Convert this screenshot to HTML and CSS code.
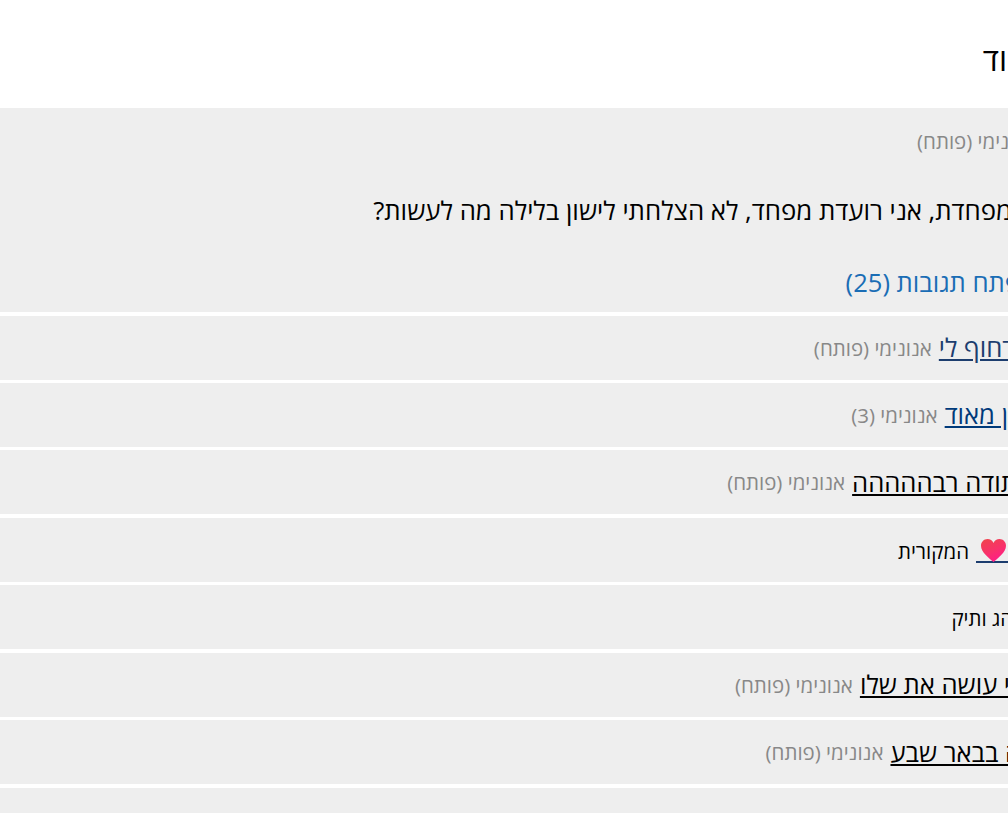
FILE: index.html
```html
<!DOCTYPE html>
<html lang="he" dir="rtl">
<head>
    <meta charset="utf-8">
    <title>פורום</title>
    <link rel="stylesheet" href="styles.css">
</head>
<body>
    <div class="page">
        <h1 class="page-title">וד</h1>

        <div class="topic">
            <div class="topic-author">אנונימי (פותח)</div>
            <p class="topic-text">מפחדת, אני רועדת מפחד, לא הצלחתי לישון בלילה מה לעשות?</p>
            <a class="topic-replies" href="#">פתח תגובות (25)</a>
        </div>

        <div class="row"><div class="row-inner shift-a"><a class="row-link navy" href="#">רחוף לי</a> <span class="meta">אנונימי (פותח)</span></div></div>
        <div class="row"><div class="row-inner shift-b"><a class="row-link blue" href="#">ן מאוד</a> <span class="meta">אנונימי (3)</span></div></div>
        <div class="row"><div class="row-inner shift-c"><a class="row-link" href="#">תודה רבההההה</a> <span class="meta">אנונימי (פותח)</span></div></div>
        <div class="row"><div class="row-inner shift-d"><a class="heart-link" href="#"><svg class="heart" viewBox="0 0 25 23" width="25" height="23"><defs><linearGradient id="heartFill" x1="0.1" y1="0" x2="0.6" y2="1"><stop offset="0" stop-color="#f0444c"/><stop offset="0.55" stop-color="#f8326a"/><stop offset="1" stop-color="#ff1c88"/></linearGradient></defs><path fill="url(#heartFill)" d="M12.500 23C8 19 0 13.500 0 6.800C0 2.800 3 0 6.500 0C9.200 0 11.400 1.500 12.500 4C13.600 1.500 15.800 0 18.500 0C22 0 25 2.800 25 6.800C25 13.500 17 19 12.500 23Z"/></svg></a> <span class="plain">המקורית</span></div></div>
        <div class="row"><div class="row-inner shift-e"><span class="plain">נהג ותיק</span></div></div>
        <div class="row"><div class="row-inner shift-f"><a class="row-link" href="#">י עושה את שלו</a> <span class="meta">אנונימי (פותח)</span></div></div>
        <div class="row"><div class="row-inner shift-g"><a class="row-link" href="#">ה בבאר שבע</a> <span class="meta">אנונימי (פותח)</span></div></div>
        <div class="row"></div>
    </div>
</body>
</html>
```

FILE: styles.css
```css
html, body {
    margin: 0;
    padding: 0;
    overflow: hidden;
    height: 813px;
}
body {
    font-family: "Open Sans", "Noto Sans", sans-serif;
    background-color: #fff;
    color: #000;
}
.page {
    width: 1008px;
    height: 813px;
    overflow: hidden;
}
.page-title {
    height: 108px;
    margin: 0 1px 0 0;
    padding-top: 39px;
    box-sizing: border-box;
    font-size: 32px;
    line-height: 40px;
    font-weight: 500;
    white-space: nowrap;
}
.topic {
    height: 204px;
    background-color: #eee;
    overflow: hidden;
    margin-bottom: 3.5px;
}
.topic-author {
    margin: 19px -27px 0 0;
    font-size: 20.48px;
    line-height: 28px;
    color: #888;
    white-space: nowrap;
}
.topic-text {
    margin: 35px -4px 0 0;
    font-size: 25.76px;
    line-height: 40px;
    white-space: nowrap;
}
.topic-replies {
    display: block;
    margin: 35px -12px 0 0;
    font-size: 25.6px;
    line-height: 36px;
    color: #1a6db5;
    text-decoration: none;
    white-space: nowrap;
}
.row {
    height: 64px;
    margin-bottom: 3.45px;
    background-color: #eee;
    overflow: hidden;
}
.row-inner {
    display: flex;
    align-items: center;
    gap: 7px;
    height: 100%;
    white-space: nowrap;
}
.shift-a { margin-right: -7px; }
.shift-b { margin-right: 0; }
.shift-c { margin-right: -9px; }
.shift-d { margin-right: -2px; }
.shift-e { margin-right: -14px; }
.shift-f { margin-right: -2px; }
.shift-g { margin-right: -13px; }
.row-link {
    font-size: 25.6px;
    color: #000;
}
.row-link.navy {
    color: #1c3d6e;
}
.row-link.blue {
    color: #003a7a;
}
.heart-link {
    display: flex;
    margin-top: 2px;
    padding: 0 4px 0 5px;
    border-bottom: 2px solid #1c3d6e;
}
.heart {
    margin-bottom: -1px;
}
.meta {
    font-size: 20.48px;
    color: #888;
}
.plain {
    font-size: 20.48px;
    padding-top: 2px;
}
```
